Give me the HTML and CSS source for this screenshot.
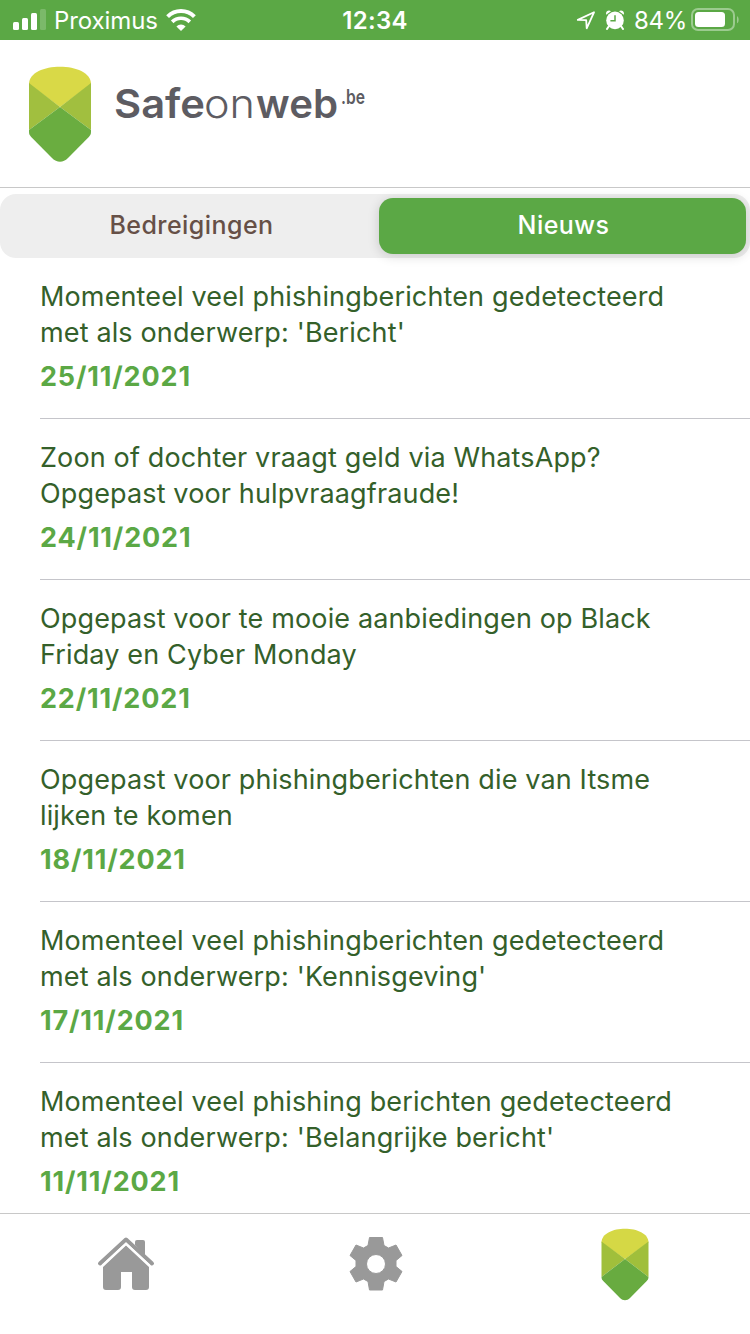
FILE: index.html
```html
<!DOCTYPE html>
<html lang="nl">
<head>
    <meta charset="UTF-8">
    <meta name="viewport" content="width=device-width, initial-scale=1.0">
    <title>Safeonweb</title>
    <link rel="stylesheet" href="styles.css">
</head>
<body>
    <div class="status-bar">
        <div class="status-left">
            <svg class="signal" width="34" height="22" viewBox="0 0 34 22" fill="#fff">
                <rect x="0" y="13" width="6" height="8" rx="1.5"/>
                <rect x="9" y="9" width="6" height="12" rx="1.5"/>
                <rect x="18" y="4" width="6" height="17" rx="1.5"/>
                <rect x="27" y="0" width="6" height="21" rx="1.5" opacity="0.2"/>
            </svg>
            <span class="carrier">Proximus</span>
            <svg class="wifi" width="30" height="22" viewBox="0 0 30 22">
                <path d="M1.6 7.6a19 19 0 0 1 26.8 0" fill="none" stroke="#fff" stroke-width="4"/>
                <path d="M6.2 12.9a12.4 12.4 0 0 1 17.6 0" fill="none" stroke="#fff" stroke-width="3.7"/>
                <path d="M15 22l-4.6-4.6a6.6 6.6 0 0 1 9.2 0z" fill="#fff"/>
            </svg>
        </div>
        <span class="time">12:34</span>
        <div class="status-right">
            <svg class="location" width="20" height="20" viewBox="0 0 20 20">
                <path d="M1.8 9.9L18 2.3l-7.3 16-.5-8.2z" fill="none" stroke="#fff" stroke-width="1.8" stroke-linejoin="round"/>
            </svg>
            <svg class="alarm" width="20" height="20" viewBox="0 0 20 20">
                <path d="M4 16l-2 3M16 16l2 3" stroke="#fff" stroke-width="2" stroke-linecap="round"/>
                <path d="M1.2 4.8C.2 1.5 3.5-.6 6 1.2zM18.8 4.8c1-3.3-2.3-5.4-4.8-3.6z" fill="#fff"/>
                <circle cx="10" cy="10.4" r="8.8" fill="#fff"/>
                <path d="M10 5.2v5.6H5.4" fill="none" stroke="#5ba845" stroke-width="1.5"/>
            </svg>
            <span class="percent">84%</span>
            <svg class="battery" width="48" height="24" viewBox="0 0 48 24">
                <rect x="1" y="1" width="42" height="21" rx="6" fill="none" stroke="#fff" stroke-width="2" opacity="0.4"/>
                <rect x="4" y="4" width="30" height="15" rx="3.5" fill="#fff"/>
                <path d="M46 8c2.2 1.3 2.2 6 0 7.3z" fill="#fff" opacity="0.4"/>
            </svg>
        </div>
    </div>

    <header class="header">
        <svg class="shield" width="64" height="97" viewBox="0 0 64 97">
            <path d="M1 18C1-5 63-5 63 18L32 41z" fill="#d9d947"/>
            <path d="M1 17l31 24L1 64zM63 17L32 41l31 23z" fill="#a1bf3f"/>
            <path d="M32 41L1 64v2c0 2 .8 3.5 2.2 5L24 92c5 5 11 5 16 0l20.8-21c1.4-1.5 2.2-3 2.2-5v-2z" fill="#6aad40"/>
        </svg>
        <svg class="wordmark" width="260" height="80" viewBox="0 0 260 80">
            <g class="wordmark-text">
                <text class="bold" x="0" y="52" textLength="91" lengthAdjust="spacingAndGlyphs">Safe</text>
                <text class="thin" x="90" y="52" textLength="51" lengthAdjust="spacingAndGlyphs">on</text>
                <text class="bold" x="142" y="52" textLength="82" lengthAdjust="spacingAndGlyphs">web</text>
                <text class="domain" x="227" y="38" textLength="24" lengthAdjust="spacingAndGlyphs">.be</text>
            </g>
        </svg>
    </header>

    <div class="tabs">
        <button class="tab">Bedreigingen</button>
        <button class="tab active">Nieuws</button>
    </div>

    <main class="news">
        <article class="news-item">
            <p class="title">Momenteel veel phishingberichten gedetecteerd<br>met als onderwerp: 'Bericht'</p>
            <p class="date">25/11/2021</p>
        </article>
        <article class="news-item">
            <p class="title">Zoon of dochter vraagt geld via WhatsApp?<br>Opgepast voor hulpvraagfraude!</p>
            <p class="date">24/11/2021</p>
        </article>
        <article class="news-item">
            <p class="title">Opgepast voor te mooie aanbiedingen op Black<br>Friday en Cyber Monday</p>
            <p class="date">22/11/2021</p>
        </article>
        <article class="news-item">
            <p class="title">Opgepast voor phishingberichten die van Itsme<br>lijken te komen</p>
            <p class="date">18/11/2021</p>
        </article>
        <article class="news-item">
            <p class="title">Momenteel veel phishingberichten gedetecteerd<br>met als onderwerp: 'Kennisgeving'</p>
            <p class="date">17/11/2021</p>
        </article>
        <article class="news-item">
            <p class="title">Momenteel veel phishing berichten gedetecteerd<br>met als onderwerp: 'Belangrijke bericht'</p>
            <p class="date">11/11/2021</p>
        </article>
    </main>

    <nav class="bottom-nav">
        <a class="nav-item">
            <svg class="home" width="58" height="56" viewBox="0 0 58 56">
                <path d="M38 9V6a2 2 0 0 1 2-2h6a2 2 0 0 1 2 2v15z" fill="#999"/>
                <path d="M3 27.5L29 3.500l26 24" fill="none" stroke="#999" stroke-width="4" stroke-linecap="round" stroke-linejoin="round"/>
                <path d="M6 31L29 9.500 52 31v20a3 3 0 0 1-3 3H38a3 3 0 0 1-3-3V36H24v15a3 3 0 0 1-3 3H9a3 3 0 0 1-3-3z" fill="#999"/>
                <path d="M5.500 29.500L29 7.500l23.500 22" fill="none" stroke="#fff" stroke-width="2"/>
            </svg>
        </a>
        <a class="nav-item">
            <svg class="gear" width="54" height="56" viewBox="0 0 54 56">
                <path fill-rule="evenodd" stroke="#999" stroke-linejoin="round" fill="#999" d="M20.5 1.5h13l1.5 8 4.5 2.5 7.5-3 6 10.5-6 5v6l6 5L47 46l-7.5-3-4.5 2.5-1.5 8.5h-13L19 45.5 14.5 43 7 46 1 35.500l6-5v-6l-6-5L7 9l7.500 3 4.500-2.500zM27 18.500a9.500 9.500 0 1 0 0 19 9.500 9.500 0 0 0 0-19z"/>
            </svg>
        </a>
        <a class="nav-item">
            <svg width="48" height="73" viewBox="0 0 48 73">
                <path d="M.5 14.5C.5-4 47.5-4 47.5 14.500L24 31z" fill="#d5d845"/>
                <path d="M.5 13.5L24 31 .5 49zM47.5 13.5L24 31l23.500 18z" fill="#a0bf3b"/>
                <path d="M24 31L.5 49c0 2 .7 3 2 4.3L19 70c3 3 7 3 10 0l16.5-16.7c1.3-1.3 2-2.3 2-4.3z" fill="#68ab40"/>
            </svg>
        </a>
    </nav>
</body>
</html>
```

FILE: styles.css
```css
* {
    box-sizing: border-box;
}

body {
    font-family: Inter, Roboto, sans-serif;
    background-color: #fff;
    margin: 0;
    height: 1334px;
    display: flex;
    flex-direction: column;
    overflow: hidden;
}

svg {
    display: block;
    flex-shrink: 0;
}

.status-bar {
    height: 40px;
    flex-shrink: 0;
    background-color: #5ba845;
    color: #fff;
    display: grid;
    grid-template-columns: 1fr auto 1fr;
    align-items: center;
    font-size: 24px;
    line-height: 38px;
    padding-top: 2px;
}

.status-left,
.status-right {
    display: flex;
    align-items: center;
}

.status-left {
    padding-left: 13px;
}

.signal,
.battery {
    margin-top: -2px;
}

.carrier {
    margin-left: 7px;
    letter-spacing: -0.1px;
}

.wifi {
    margin: -2px 0 0 8px;
}

.time {
    font-weight: 600;
    letter-spacing: 0.3px;
}

.status-right {
    justify-content: flex-end;
    padding-right: 11px;
}

.location,
.alarm {
    margin-top: -2px;
}

.alarm {
    margin-left: 9px;
}

.percent {
    margin: 0 4px 0 9px;
    letter-spacing: -0.3px;
}

.header {
    height: 148px;
    flex-shrink: 0;
    border-bottom: 1px solid #c8c8c8;
    display: flex;
    align-items: flex-start;
    padding: 26px 28px;
}

.wordmark {
    margin-left: 22px;
}

.wordmark-text {
    fill: #5d5c62;
    font-size: 40px;
}

.bold {
    font-weight: 600;
}

.thin {
    font-weight: 300;
}

.domain {
    font-size: 20px;
    font-weight: 600;
}

.tabs {
    display: grid;
    grid-template-columns: 1fr 367px;
    height: 64px;
    flex-shrink: 0;
    margin-top: 6px;
    padding: 4px;
    background-color: #eee;
    border-radius: 16px;
}

.tab {
    border: none;
    border-radius: 14px;
    background: none;
    color: #665047;
    font-family: inherit;
    font-size: 25px;
    font-weight: 500;
    letter-spacing: 0.45px;
    padding: 0 0 3px;
}

.tab.active {
    background-color: #5ba845;
    color: #fff;
    box-shadow: 0 2px 12px rgba(0, 0, 0, 0.16);
    padding-left: 2px;
}

.news {
    flex: 1;
    min-height: 0;
    overflow: hidden;
    padding-left: 40px;
}

.news-item {
    height: 161px;
    padding-top: 21px;
    border-bottom: 1px solid #c5c5ca;
}

.news-item p {
    margin: 0;
    line-height: 36px;
}

.title {
    color: #34602a;
    font-size: 27px;
    letter-spacing: 0.14px;
    white-space: nowrap;
}

.news-item .date {
    margin-top: 8px;
    color: #5ba845;
    font-size: 27px;
    font-weight: 700;
    letter-spacing: 0.85px;
}

.bottom-nav {
    height: 121px;
    flex-shrink: 0;
    border-top: 1px solid #c8c8c8;
    display: grid;
    grid-template-columns: repeat(3, 1fr);
    padding-top: 14px;
}

.nav-item {
    height: 73px;
    display: flex;
    justify-content: center;
    align-items: center;
}

.home,
.gear {
    margin: 0 0 2px 2px;
}
```
